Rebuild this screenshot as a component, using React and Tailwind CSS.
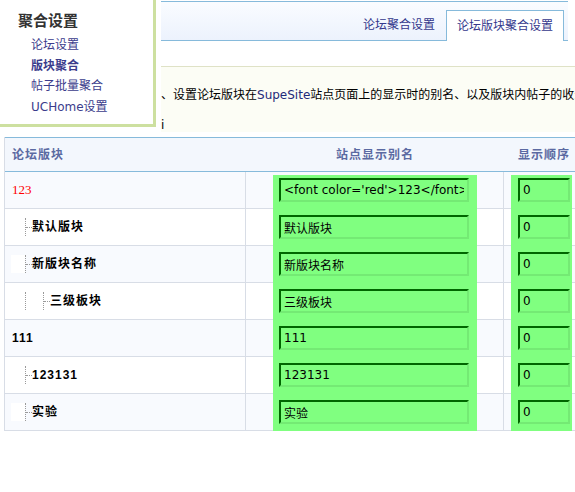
import React from "react";

const rows = [
  { name: "123", level: 0, red: true, alias: "<font color='red'>123</font>" },
  { name: "默认版块", level: 1, alias: "默认版块" },
  { name: "新版块名称", level: 1, alias: "新版块名称" },
  { name: "三级板块", level: 2, alias: "三级板块" },
  { name: "111", level: 0, alias: "111" },
  { name: "123131", level: 1, alias: "123131" },
  { name: "实验", level: 1, alias: "实验" },
];

const menuLinks = [
  { label: "论坛设置" },
  { label: "版块聚合", active: true },
  { label: "帖子批量聚合" },
  { label: "UCHome设置" },
];

const inputCls =
  "h-[24px] border-2 border-t-[#006600] border-l-[#006600] border-r-[#74ea74] border-b-[#74ea74] bg-[#80ff80] px-[3px] text-[12px] text-black outline-none";

function Tree({ level }) {
  if (level === 0) return <div className="w-[7px] shrink-0" />;
  return (
    <div className="flex h-[18px] shrink-0 items-center">
      <div className="ml-[6px] h-[18px] w-[14px] bg-white" />
      <div className="h-[18px] border-l border-dotted border-[#9a9a9a]" />
      {level === 2 && (
        <>
          <div className="w-[17px]" />
          <div className="h-[18px] border-l border-dotted border-[#9a9a9a]" />
        </>
      )}
      <div className="w-[6px] border-t border-dotted border-[#9a9a9a]" />
    </div>
  );
}

export default function App() {
  return (
    <div className="relative h-[492px] w-[575px] overflow-hidden bg-white font-['DejaVu_Sans','Noto_Sans_CJK_SC',sans-serif] text-[12px] text-black">
      {/* Top */}
      <div className="flex items-start">
        {/* Menu */}
        <div className="h-[127px] w-[156px] shrink-0 border-b-[3px] border-r-[3px] border-[#cde0a0] pl-[18px] pt-[11px]">
          <h3 className="text-[15px] font-bold leading-[20px] text-[#333]">聚合设置</h3>
          <ul className="mt-[4px] pl-[13px]">
            {menuLinks.map((l) => (
              <li
                key={l.label}
                className={`leading-[20.5px] text-[12px] text-[#3b3c8c] ${l.active ? "font-bold" : ""}`}>
                {l.label}
              </li>
            ))}
          </ul>
        </div>

        {/* Content */}
        <div className="ml-[5px] min-w-0 flex-1">
          <div className="mr-[7px] mt-px flex h-[40px] items-end justify-end border-y border-[#86badb] bg-gradient-to-b from-[#fafcff] to-[#ecf2fd] pr-[4px]">
            <div className="mr-px h-[30px] px-[10px] leading-[30px] text-[#34378c]">论坛聚合设置</div>
            <div className="-mb-px h-[31px] border border-b-0 border-[#86badb] bg-white px-[10px] leading-[30px] text-[#34378c]">
              论坛版块聚合设置
            </div>
          </div>
          <div className="mt-[25px] h-[66px] overflow-hidden border-t border-[#dfe2c6] bg-[#fcfdf5] pt-[21px]">
            <div className="whitespace-nowrap leading-[14px]">
              、设置论坛版块在<span className="text-[#1f2a7a]">SupeSite</span>
              站点页面上的显示时的别名、以及版块内帖子的收录
            </div>
            <div className="mt-[16px] leading-[14px]">i</div>
          </div>
        </div>
      </div>

      {/* Table */}
      <div className="ml-[4px] mt-[5px] w-[580px] border-l border-[#d8dde6]">
        <div className="flex h-[35px] items-center border-y border-[#86badb] bg-[#f3f7fd] font-bold tracking-[1px] text-[#5b6aa2]">
          <div className="w-[241px] pl-[7px]">论坛版块</div>
          <div className="w-[258px] text-center">站点显示别名</div>
          <div className="flex-1 text-center">显示顺序</div>
        </div>
        {rows.map((r, i) => {
          const bg = i % 2 === 0 ? "bg-[#f8fafe]" : "bg-white";
          const first = i === 0;
          return (
            <div key={r.name} className={`flex h-[37px] ${bg}`}>
              <div className="flex w-[241px] items-center border-b border-r border-[#d8dde6]">
                <Tree level={r.level} />
                <span
                  className={
                    r.red
                      ? "font-['Liberation_Serif',serif] text-[13px] text-[#ff0000]"
                      : "font-bold tracking-[1px] font-['Liberation_Sans','Noto_Sans_CJK_SC',sans-serif]"
                  }>
                  {r.name}
                </span>
              </div>
              <div className="flex w-[258px] border-r border-[#d8dde6]">
                <div className="w-[27px] border-b border-[#d8dde6]" />
                <div className={`w-[204px] bg-[#80ff80] pl-[6px] ${first ? "mt-[3px] pt-[3px]" : "pt-[6px]"}`}>
                  <input readOnly defaultValue={r.alias} className={`${inputCls} w-[190px]`} />
                </div>
                <div className="flex-1 border-b border-[#d8dde6]" />
              </div>
              <div className="flex flex-1">
                <div className="w-[7px] border-b border-[#d8dde6]" />
                <div className={`w-[61px] bg-[#80ff80] pl-[7px] ${first ? "mt-[3px] pt-[3px]" : "pt-[6px]"}`}>
                  <input readOnly defaultValue="0" className={`${inputCls} w-[52px]`} />
                </div>
                <div className="flex-1 border-b border-[#d8dde6]" />
              </div>
            </div>
          );
        })}
      </div>
    </div>
  );
}
